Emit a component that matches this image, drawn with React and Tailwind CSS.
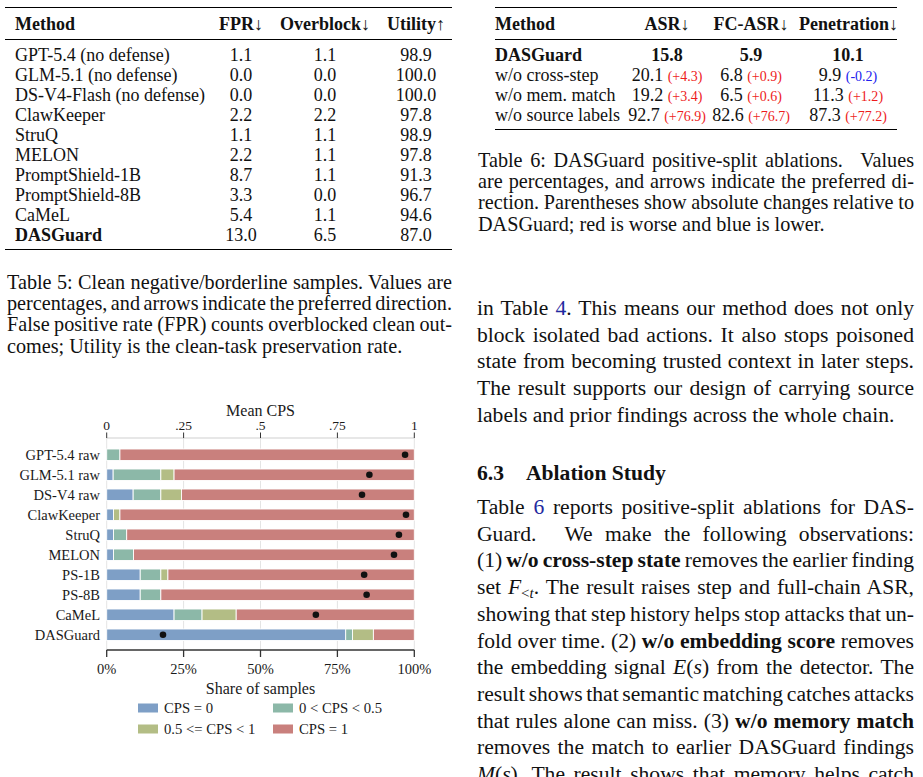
import React from "react";

const T5 = [
  ["GPT-5.4 (no defense)", "1.1", "1.1", "98.9"],
  ["GLM-5.1 (no defense)", "0.0", "0.0", "100.0"],
  ["DS-V4-Flash (no defense)", "0.0", "0.0", "100.0"],
  ["ClawKeeper", "2.2", "2.2", "97.8"],
  ["StruQ", "1.1", "1.1", "98.9"],
  ["MELON", "2.2", "1.1", "97.8"],
  ["PromptShield-1B", "8.7", "1.1", "91.3"],
  ["PromptShield-8B", "3.3", "0.0", "96.7"],
  ["CaMeL", "5.4", "1.1", "94.6"],
];

const T6 = [
  ["w/o cross-step", "20.1", "+4.3", "6.8", "+0.9", "9.9", "-0.2"],
  ["w/o mem. match", "19.2", "+3.4", "6.5", "+0.6", "11.3", "+1.2"],
  ["w/o source labels", "92.7", "+76.9", "82.6", "+76.7", "87.3", "+77.2"],
];

const BARS = [
  ["GPT-5.4 raw", [0, 0.043, 0.043], 0.97],
  ["GLM-5.1 raw", [0.021, 0.176, 0.219], 0.854],
  ["DS-V4 raw", [0.086, 0.176, 0.243], 0.83],
  ["ClawKeeper", [0.022, 0.022, 0.043], 0.973],
  ["StruQ", [0.022, 0.065, 0.065], 0.95],
  ["MELON", [0.022, 0.087, 0.087], 0.934],
  ["PS-1B", [0.109, 0.176, 0.199], 0.837],
  ["PS-8B", [0.109, 0.176, 0.176], 0.845],
  ["CaMeL", [0.219, 0.31, 0.421], 0.68],
  ["DASGuard", [0.777, 0.799, 0.867], 0.183],
];

const COLORS = ["#7e9fc6", "#8cb8a8", "#b3bd85", "#c9807d"];
const X0 = 106.7;
const W = 307.6;
const X = (f) => X0 + W * f;

function Delta({ v }) {
  const neg = v.startsWith("-");
  return (
    <span
      className={
        neg ? "text-[14px] leading-none text-[#2020ee]" : "text-[14px] leading-none text-[#ee1c1c]"
      }
    >
      ({v})
    </span>
  );
}

function J({ children }) {
  return (
    <div className="whitespace-nowrap text-justify [text-align-last:justify] [word-spacing:-3px]">
      {children}
    </div>
  );
}

function L({ children }) {
  return <div className="whitespace-nowrap">{children}</div>;
}

function Table5() {
  return (
    <div className="w-[447px] text-[18px] leading-[20px]">
      <div className="border-t-[1.5px] border-black" />
      <div className="grid grid-cols-[200px_72px_96px_79px] pt-[5.5px] pb-[5px] font-bold">
        <div className="pl-[10px]">Method</div>
        <div className="text-center whitespace-nowrap">
          FPR<span className="font-normal">↓</span>
        </div>
        <div className="text-center whitespace-nowrap">
          Overblock<span className="font-normal">↓</span>
        </div>
        <div className="text-center whitespace-nowrap pl-[7px]">
          Utility<span className="font-normal">↑</span>
        </div>
      </div>
      <div className="border-t border-black" />
      <div className="pt-[5px] pb-[4px]">
        {T5.map((r) => (
          <div key={r[0]} className="grid grid-cols-[200px_72px_96px_79px]">
            <div className="pl-[10px] whitespace-nowrap">{r[0]}</div>
            <div className="text-center">{r[1]}</div>
            <div className="text-center">{r[2]}</div>
            <div className="text-center pl-[7px]">{r[3]}</div>
          </div>
        ))}
        <div className="grid grid-cols-[200px_72px_96px_79px]">
          <div className="pl-[10px] font-bold">DASGuard</div>
          <div className="text-center">13.0</div>
          <div className="text-center">6.5</div>
          <div className="text-center pl-[7px]">87.0</div>
        </div>
      </div>
      <div className="border-t-[1.5px] border-black" />
    </div>
  );
}

function Table6() {
  return (
    <div className="ml-[18px] w-[402px] text-[18px] leading-[20px]">
      <div className="border-t-[1.5px] border-black" />
      <div className="grid grid-cols-[130px_84px_84px_104px] pt-[5.5px] pb-[5px] font-bold">
        <div>Method</div>
        <div className="text-center whitespace-nowrap">
          ASR<span className="font-normal">↓</span>
        </div>
        <div className="text-center whitespace-nowrap">
          FC-ASR<span className="font-normal">↓</span>
        </div>
        <div className="text-center whitespace-nowrap pl-[6px]">
          Penetration<span className="font-normal">↓</span>
        </div>
      </div>
      <div className="border-t border-black" />
      <div className="pt-[5px] pb-[4.5px]">
        <div className="grid grid-cols-[130px_84px_84px_104px] font-bold">
          <div>DASGuard</div>
          <div className="text-center">15.8</div>
          <div className="text-center">5.9</div>
          <div className="text-center pl-[6px]">10.1</div>
        </div>
        {T6.map((r) => (
          <div key={r[0]} className="grid grid-cols-[130px_84px_84px_104px]">
            <div className="whitespace-nowrap">{r[0]}</div>
            <div className="text-center whitespace-nowrap">
              {r[1]} <Delta v={r[2]} />
            </div>
            <div className="text-center whitespace-nowrap">
              {r[3]} <Delta v={r[4]} />
            </div>
            <div className="text-center whitespace-nowrap pl-[6px]">
              {r[5]} <Delta v={r[6]} />
            </div>
          </div>
        ))}
      </div>
      <div className="border-t-[1.5px] border-black" />
    </div>
  );
}

function Chart() {
  const ticksTop = [
    [0, "0"],
    [0.25, ".25"],
    [0.5, ".5"],
    [0.75, ".75"],
    [1, "1"],
  ];
  const ticksBot = ["0%", "25%", "50%", "75%", "100%"];
  return (
    <svg width="447" height="350" viewBox="5 395 447 350" className="block">
      <g fontFamily="'Liberation Serif', serif" fill="#1a1a1a">
        <text x="260.5" y="410" fontSize="16" textAnchor="middle" dominantBaseline="central">
          Mean CPS
        </text>
        {ticksTop.map(([f, t]) => (
          <text key={t} x={X(f)} y="425.5" fontSize="13.5" textAnchor="middle" dominantBaseline="central">
            {t}
          </text>
        ))}
      </g>
      {ticksTop.map(([f]) => (
        <line key={"g" + f} x1={X(f)} x2={X(f)} y1="438" y2="650" stroke="#e4e4e4" strokeWidth="1" />
      ))}
      <line x1={X0} x2={X(1)} y1="438" y2="438" stroke="#cfcfcf" strokeWidth="1" />
      {ticksTop.map(([f]) => (
        <line key={"t" + f} x1={X(f)} x2={X(f)} y1="432.5" y2="438" stroke="#333" strokeWidth="1" />
      ))}
      {BARS.map(([label, cum, dot], i) => {
        const y = 449 + 20 * i;
        const bounds = [0, cum[0], cum[1], cum[2], 1];
        return (
          <g key={label}>
            <text
              x="100"
              y={y + 6}
              fontSize="14.5"
              textAnchor="end"
              dominantBaseline="central"
              fontFamily="'Liberation Serif', serif"
              fill="#1a1a1a"
            >
              {label}
            </text>
            {[0, 1, 2, 3].map((k) =>
              bounds[k + 1] - bounds[k] > 0.0005 ? (
                <rect
                  key={k}
                  x={X(bounds[k])}
                  y={y}
                  width={W * (bounds[k + 1] - bounds[k])}
                  height="11.5"
                  fill={COLORS[k]}
                  stroke="#ffffff"
                  strokeWidth="0.9"
                />
              ) : null
            )}
            <circle cx={X(dot)} cy={y + 5.75} r="3.3" fill="#111" />
          </g>
        );
      })}
      <line x1={X0} x2={X(1)} y1="650" y2="650" stroke="#333" strokeWidth="1.4" />
      {ticksBot.map((t, k) => (
        <line key={"b" + t} x1={X(k / 4)} x2={X(k / 4)} y1="650" y2="657" stroke="#333" strokeWidth="1.3" />
      ))}
      <g fontFamily="'Liberation Serif', serif" fill="#1a1a1a">
        {ticksBot.map((t, k) => (
          <text key={t} x={X(k / 4)} y="668.5" fontSize="14.5" textAnchor="middle" dominantBaseline="central">
            {t}
          </text>
        ))}
        <text x="260.5" y="688" fontSize="16" textAnchor="middle" dominantBaseline="central">
          Share of samples
        </text>
        <rect x="138" y="703.5" width="20" height="9" fill={COLORS[0]} />
        <text x="164" y="708" fontSize="14.7" dominantBaseline="central">
          CPS = 0
        </text>
        <rect x="273" y="703.5" width="20" height="9" fill={COLORS[1]} />
        <text x="299" y="708" fontSize="14.7" dominantBaseline="central">
          0 &lt; CPS &lt; 0.5
        </text>
        <rect x="138" y="724.5" width="20" height="9" fill={COLORS[2]} />
        <text x="164" y="729" fontSize="14.7" dominantBaseline="central">
          0.5 &lt;= CPS &lt; 1
        </text>
        <rect x="273" y="724.5" width="20" height="9" fill={COLORS[3]} />
        <text x="299" y="729" fontSize="14.7" dominantBaseline="central">
          CPS = 1
        </text>
      </g>
    </svg>
  );
}

const LINK = "text-[#1f2aa0]";

export default function App() {
  return (
    <div className="w-[923px] h-[777px] overflow-hidden bg-white text-[#111] font-['Liberation_Serif',serif] flex">
      <div className="ml-[5px] w-[447px] pt-[7px]">
        <Table5 />
        <div className="ml-[2px] w-[445px] mt-[22px] text-[20.2px] leading-[21.4px]">
          <J>Table 5: Clean negative/borderline samples. Values are</J>
          <J>percentages, and arrows indicate the preferred direction.</J>
          <J>False positive rate (FPR) counts overblocked clean out-</J>
          <L>comes; Utility is the clean-task preservation rate.</L>
        </div>
        <div className="mt-[38px]">
          <Chart />
        </div>
      </div>
      <div className="ml-[25px] w-[438px] pt-[7px]">
        <Table6 />
        <div className="ml-[1px] w-[436px] mt-[20px] text-[20.2px] leading-[21.2px]">
          <J>
            Table 6: DASGuard positive-split ablations.<span className="inline-block w-[10px]" /> Values
          </J>
          <J>are percentages, and arrows indicate the preferred di-</J>
          <J>rection. Parentheses show absolute changes relative to</J>
          <L>DASGuard; red is worse and blue is lower.</L>
        </div>
        <div className="w-[437px] mt-[60px] text-[21.6px] leading-[26.7px]">
          <J>
            in Table <span className={LINK}>4</span>. This means our method does not only
          </J>
          <J>block isolated bad actions. It also stops poisoned</J>
          <J>state from becoming trusted context in later steps.</J>
          <J>The result supports our design of carrying source</J>
          <L>labels and prior findings across the whole chain.</L>
        </div>
        <div className="mt-[32px] text-[21.6px] leading-[26.7px] font-bold whitespace-nowrap">
          <span>6.3</span>
          <span className="ml-[22px]">Ablation Study</span>
        </div>
        <div className="w-[437px] mt-[7px] text-[21.6px] leading-[26.7px]">
          <J>
            Table <span className={LINK}>6</span> reports positive-split ablations for DAS-
          </J>
          <div className="flex whitespace-nowrap">
            <span>Guard.</span>
            <div className="ml-[28px] flex-1">
              <J>We make the following observations:</J>
            </div>
          </div>
          <J>
            (1) <b>w/o cross-step state</b> removes the earlier finding
          </J>
          <J>
            set <i>F</i>
            <sub className="text-[15px]">
              &lt;<i>t</i>
            </sub>
            . The result raises step and full-chain ASR,
          </J>
          <J>showing that step history helps stop attacks that un-</J>
          <J>
            fold over time. (2) <b>w/o embedding score</b> removes
          </J>
          <J>
            the embedding signal <i>E</i>(<i>s</i>) from the detector. The
          </J>
          <J>result shows that semantic matching catches attacks</J>
          <J>
            that rules alone can miss. (3) <b>w/o memory match</b>
          </J>
          <J>removes the match to earlier DASGuard findings</J>
          <J>
            <i>M</i>(<i>s</i>). The result shows that memory helps catch
          </J>
        </div>
      </div>
    </div>
  );
}
